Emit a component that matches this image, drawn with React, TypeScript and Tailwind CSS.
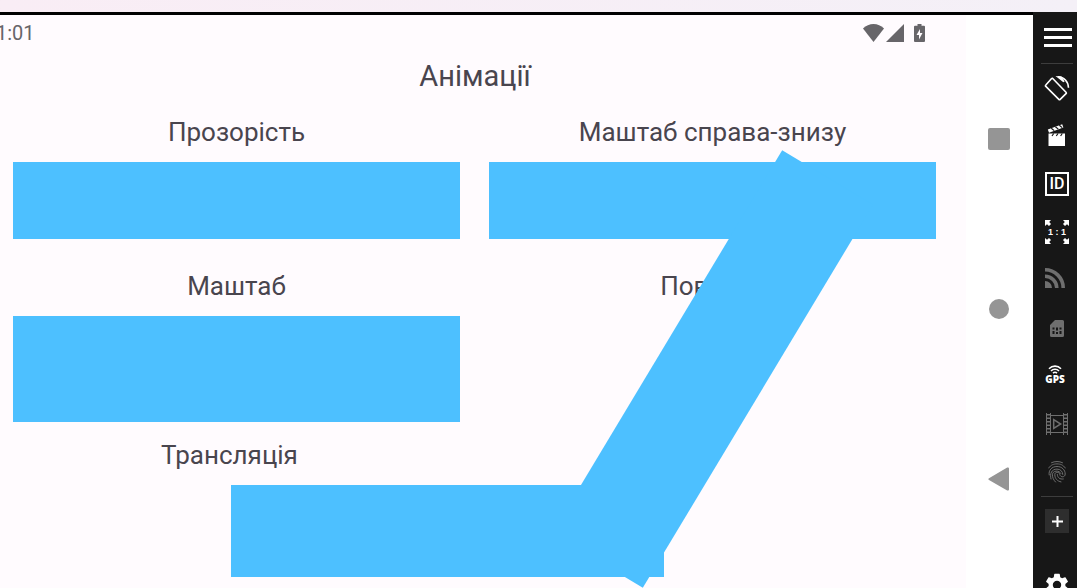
import type { ReactNode } from "react";

function WifiIcon() {
  return (
    <svg width="21" height="18" viewBox="0 0 21 18" fill="currentColor" aria-hidden="true">
      <path d="M10.500 18 0 4.500C3 1.600 6.500 0 10.500 0S18 1.600 21 4.500Z" />
    </svg>
  );
}

function SignalIcon() {
  return (
    <svg width="18" height="18" viewBox="0 0 18 18" fill="currentColor" aria-hidden="true">
      <path d="M18 0v18H0z" />
    </svg>
  );
}

function BatteryIcon() {
  return (
    <svg width="11" height="18" viewBox="0 0 11 18" fill="currentColor" aria-hidden="true">
      <path
        fillRule="evenodd"
        d="M3.500 0h4v1.700H10a1 1 0 0 1 1 1V17a1 1 0 0 1-1 1H1a1 1 0 0 1-1-1V2.700a1 1 0 0 1 1-1h2.500ZM6 5l-3.500 6H5v4.500L8.500 9H6Z"
      />
    </svg>
  );
}

function RotateIcon() {
  return (
    <svg width="26" height="26" viewBox="0 0 26 26" fill="none" stroke="#fff" strokeWidth="1.600" aria-hidden="true">
      <path d="M8.500 3.300 22 17.200a1 1 0 0 1 0 1.400l-5.800 5.800a1 1 0 0 1-1.400 0L1.800 11.400a1 1 0 0 1 0-1.400l5.800-6.400a.8.8 0 0 1 .9-.3Z" />
      <path d="M14 1.800c6 .2 10.300 4.600 10.500 11" />
      <path d="m11.500 1 6 .4 3.200 5.200-1.400.6Z" fill="#fff" stroke="none" />
    </svg>
  );
}

function ClapperIcon() {
  return (
    <svg className="mr-px mb-[3px]" width="20" height="24" viewBox="0 0 20 24" aria-hidden="true">
      <path d="M1.500 10.500H18V23H1.500z" fill="#fff" />
      <path d="m.8 6.500 14.400-5.200 1.200 3.200L2 9.700z" fill="#fff" />
      <path d="m4.300 5.200 2.900 2.400M8.400 3.700l2.900 2.400M12.300 2.200l2.900 2.400M6.700 10.500 5 13M11 10.500 9.300 13M15.300 10.500 13.600 13" stroke="#171717" strokeWidth="1.200" />
    </svg>
  );
}

function IdIcon() {
  return (
    <span className="flex size-6 items-center justify-center border-2 border-white font-['Roboto',sans-serif] text-base leading-none font-medium text-white">
      ID
    </span>
  );
}

function PixelPerfectIcon() {
  return (
    <span className="relative flex size-6 items-center justify-center">
      <svg className="absolute inset-0" width="24" height="24" viewBox="0 0 24 24" fill="#fff" aria-hidden="true">
        <path d="M0 0h6L4.200 2 6 4 4 6 2 4.200 0 6zM24 0v6l-2-1.800L20 6l-2-2 1.800-2L18 0zM0 24v-6l2 1.800L4 18l2 2-1.800 2L6 24zM24 24h-6l1.800-2L18 20l2-2 2 1.800 2-1.800z" />
      </svg>
      <span className="font-['Liberation_Sans',sans-serif] text-[9px] leading-none font-bold whitespace-nowrap text-white">1 : 1</span>
    </span>
  );
}

function RssIcon() {
  return (
    <svg className="mr-1 mb-1" width="20" height="20" viewBox="0 0 20 20" fill="none" stroke="#6f6f6f" strokeWidth="3.600" aria-hidden="true">
      <path d="M0 1.800A18.200 18.200 0 0 1 18.200 20M0 8.200A11.800 11.800 0 0 1 11.800 20" />
      <path d="M0 13A7 7 0 0 1 7 20H0Z" fill="#6f6f6f" stroke="none" />
    </svg>
  );
}

function SimIcon() {
  return (
    <svg width="14" height="17" viewBox="0 0 14 17" aria-hidden="true">
      <path d="M5 0h7.500A1.500 1.500 0 0 1 14 1.500v14a1.500 1.500 0 0 1-1.500 1.500h-11A1.500 1.500 0 0 1 0 15.500V5Z" fill="#6f6f6f" />
      <path d="M2.500 7.500h2v2h-2zM6 7.500h2v3H6zM9.500 7.500h2v2h-2zM2.500 11h2v3h-2zM6 12h2v2H6zM9.500 11h2v3h-2z" fill="#171717" />
    </svg>
  );
}

function GpsIcon() {
  return (
    <span className="mr-1 mb-1 flex flex-col items-center">
      <svg width="14" height="9" viewBox="0 0 14 9" fill="none" stroke="#fff" strokeWidth="1.600" aria-hidden="true">
        <path d="M1 3.700c3.300-3.500 8.700-3.500 12 0M3 6c2.200-2.300 5.800-2.300 8 0M5 8.200c1.200-1.100 2.800-1.100 4 0" />
      </svg>
      <span className="font-['Open_Sans',sans-serif] text-[10px] leading-[10px] font-extrabold text-white">GPS</span>
    </span>
  );
}

function FilmIcon() {
  return (
    <svg width="22" height="22" viewBox="0 0 22 22" fill="none" stroke="#6f6f6f" aria-hidden="true">
      <path d="M4.500 0v22M17.500 0v22M.5 0v22M21.500 0v22M4.500 2.500h13M4.500 19.500h13" />
      <path d="M2.500 1v21M19.500 1v21" strokeWidth="3" strokeDasharray="1.500 2" />
      <path d="M7.700 6.500v9l7-4.500z" strokeWidth="1.500" />
    </svg>
  );
}

function FingerprintIcon() {
  return (
    <svg width="18" height="22" viewBox="0 0 18 22" fill="none" stroke="#6f6f6f" strokeWidth="1" strokeLinecap="round" aria-hidden="true">
      <path d="M3.500 1.700C7 .1 11 .1 14.500 1.700M.7 7C3 3.700 5.700 2.900 9 2.900s6 .8 8.300 4.100" />
      <path d="M1.200 14C.200 9.300 3.800 5.500 9 5.500c5 0 8.200 3.500 8.200 7.500 0 3.600-4.700 3.700-5.400.5-.5-3.100-5.100-2.900-5 .2.100 4 2.500 6.500 6.200 7.200" />
      <path d="M3 18C1.500 12.500 3.700 8.100 9 8.100c3.600 0 5.700 2.400 5.800 5.300" />
      <path d="M7.500 21c-2-2.100-3.100-4.600-3.100-7.200.1-4.500 6.800-5 8.500-1.300M9.300 13.500c.2 3.200 2.300 5 6 4.500" />
    </svg>
  );
}

function GearIcon() {
  return (
    <svg width="28" height="28" viewBox="0 0 24 24" fill="#fff" aria-hidden="true">
      <path d="M19.140 12.940c.04-.3.060-.61.060-.94 0-.32-.02-.64-.07-.94l2.030-1.580a.49.49 0 0 0 .12-.61l-1.920-3.320a.488.488 0 0 0-.59-.22l-2.390.96c-.5-.38-1.030-.7-1.620-.94l-.36-2.540a.484.484 0 0 0-.48-.41h-3.840c-.24 0-.43.170-.47.410l-.36 2.540c-.59.240-1.130.570-1.620.940l-2.390-.96c-.22-.08-.47 0-.59.220L2.740 8.870c-.12.210-.08.470.12.610l2.030 1.580c-.05.3-.09.630-.09.940s.02.640.07.940l-2.030 1.580a.49.49 0 0 0-.12.610l1.920 3.320c.12.220.37.290.59.220l2.390-.96c.5.380 1.030.7 1.620.940l.36 2.540c.05.240.24.410.48.410h3.840c.24 0 .44-.17.470-.41l.36-2.540c.59-.24 1.130-.56 1.620-.94l2.390.96c.22.080.47 0 .59-.22l1.920-3.320a.49.49 0 0 0-.12-.61zM12 15.600a3.600 3.600 0 1 1 0-7.200 3.600 3.600 0 0 1 0 7.200" />
    </svg>
  );
}

function ToolButton({ label, children }: { label: string; children: ReactNode }) {
  return (
    <button aria-label={label} className="flex h-12 w-full shrink-0 items-center justify-center">
      {children}
    </button>
  );
}

function Toolbar() {
  return (
    <aside className="flex w-11 shrink-0 flex-col items-center bg-[#171717] pl-1">
      <button aria-label="Menu" className="flex h-[51px] w-full shrink-0 flex-col items-end justify-center gap-[5px] pr-[5px] pb-px">
        <span className="h-[3px] w-7 bg-white" />
        <span className="h-[3px] w-7 bg-white" />
        <span className="h-[3px] w-7 bg-white" />
      </button>
      <hr className="w-8 shrink-0 border-[#3d3d3d]" />
      <ToolButton label="Rotate"><RotateIcon /></ToolButton>
      <ToolButton label="Camera"><ClapperIcon /></ToolButton>
      <ToolButton label="Identifiers"><IdIcon /></ToolButton>
      <ToolButton label="Pixel perfect"><PixelPerfectIcon /></ToolButton>
      <ToolButton label="Network"><RssIcon /></ToolButton>
      <ToolButton label="SIM"><SimIcon /></ToolButton>
      <ToolButton label="GPS"><GpsIcon /></ToolButton>
      <ToolButton label="Media"><FilmIcon /></ToolButton>
      <ToolButton label="Fingerprint"><FingerprintIcon /></ToolButton>
      <hr className="w-8 shrink-0 border-[#3d3d3d]" />
      <ToolButton label="More">
        <span className="flex size-6 items-center justify-center bg-[#2e2e2e]">
          <svg width="12" height="12" viewBox="0 0 12 12" stroke="#fff" strokeWidth="2" aria-hidden="true">
            <path d="M6.500 1v11M1 6.500h11" />
          </svg>
        </span>
      </ToolButton>
      <div className="h-4 shrink-0" />
      <ToolButton label="Settings"><GearIcon /></ToolButton>
    </aside>
  );
}

function NavigationBar() {
  return (
    <nav className="flex w-[67px] shrink-0 flex-col items-center bg-white pt-[113px] pr-px text-[#959595]">
      <button aria-label="Overview" className="size-[22px] rounded-xs bg-current" />
      <button aria-label="Home" className="mt-[149px] size-5 rounded-full bg-current" />
      <button aria-label="Back" className="mt-[148px] mr-[2px]">
        <svg width="21" height="24" viewBox="0 0 21 24" fill="currentColor" aria-hidden="true">
          <path d="M19.200.6 1 11.200a1 1 0 0 0 0 1.700l18.200 10.500a1.200 1.200 0 0 0 1.800-1V1.600a1.200 1.200 0 0 0-1.800-1Z" />
        </svg>
      </button>
    </nav>
  );
}

function Demo({ label, className, children }: { label: string; className?: string; children?: ReactNode }) {
  return (
    <section className={className}>
      <h2 className="text-center text-[26px] leading-[30px]">{label}</h2>
      {children}
    </section>
  );
}

export default function App() {
  return (
    <div className="flex h-screen flex-col overflow-hidden bg-[#fffbfe] font-['Roboto','Noto_Sans',sans-serif] text-[#49454e]">
      <div className="h-3 shrink-0 bg-linear-to-r from-[#f9edf5] to-[#f4f0f7]" />
      <div className="flex min-h-0 grow">
        <div className="flex min-w-0 grow flex-col border-t-[3px] border-black">
          <div className="flex min-h-0 grow">
            <main className="min-w-0 grow">
              <header className="flex h-9 items-center justify-between pr-[41px] text-[#676569]">
                <time className="-ml-1 text-xl">1:01</time>
                <div className="flex items-center pb-px">
                  <WifiIcon />
                  <span className="ml-[2px] flex"><SignalIcon /></span>
                  <span className="ml-[10px] flex"><BatteryIcon /></span>
                </div>
              </header>
              <h1 className="mt-2 pr-[16px] text-center text-[29px] leading-[34px]">Анімації</h1>
              <div className="mt-[24px] grid grid-cols-2 gap-x-[29px] pr-[30px] pl-[13px]">
                <Demo label="Прозорість">
                  <div className="mt-[15px] h-[77px] bg-[#4dc0ff]" />
                </Demo>
                <Demo label="Маштаб справа-знизу">
                  <div className="mt-[15px] h-[77px] bg-[#4dc0ff]" />
                </Demo>
                <Demo label="Маштаб" className="mt-8">
                  <div className="mt-[15px] h-[106px] bg-[#4dc0ff]" />
                </Demo>
                <Demo label="Поворот" className="mt-8">
                  <div className="mt-[15px] h-[106px] -rotate-59 bg-[#4dc0ff]" />
                </Demo>
                <Demo label="Трансляція" className="mt-[18px] mr-[14px]">
                  <div className="mt-[15px] h-[92px] translate-x-[218px] bg-[#4dc0ff]" />
                </Demo>
              </div>
            </main>
            <NavigationBar />
          </div>
        </div>
        <Toolbar />
      </div>
    </div>
  );
}
